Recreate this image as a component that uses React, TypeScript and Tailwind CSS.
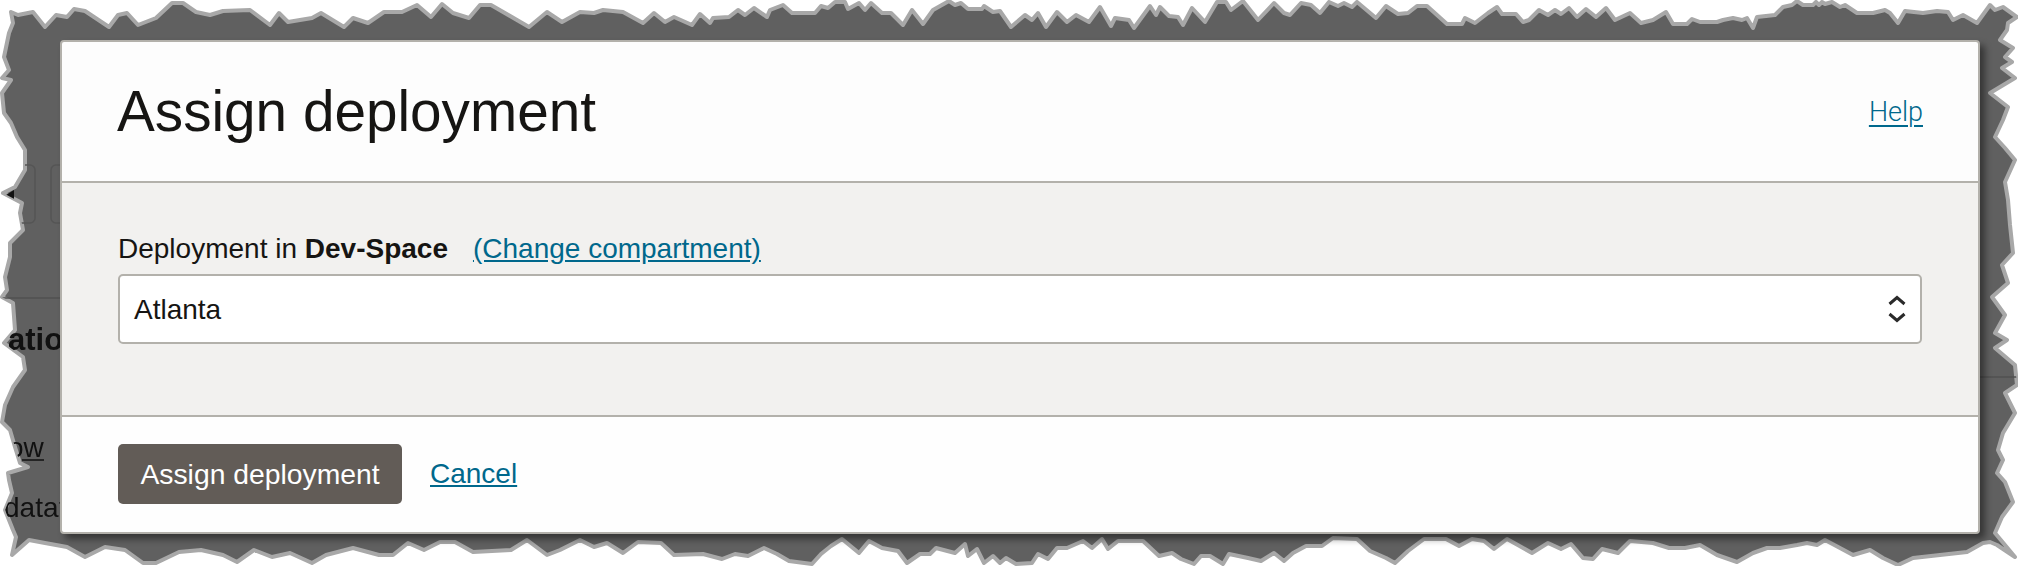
import React from 'react';

const EDGE = `11,12 18,15 33,12 45,27 56,15 67,17 74,9 85,11 109,27 118,15 127,13 138,25 156,18 172,3 183,3 196,12 210,15 223,11 250,10 270,25 279,13 288,22 312,18 321,13 344,27 353,18 368,23 384,12 402,12 417,5 431,17 442,4 453,13 469,18 480,5 491,5 529,27 547,12 562,22 580,12 594,13 603,10 623,12 643,23 654,13 665,22 674,17 692,25 700,14
710,23 713,18 729,17 738,10 745,15 754,8 767,17 770,10 783,5 792,13 815,13 821,6 828,8 835,2 845,2 848,9 859,3 865,10 871,3 882,13 891,13 903,25 912,10 923,24 933,10 949,1 955,5 961,3 968,9 982,9 984,6 993,12 1000,11 1011,27 1025,15 1032,20 1038,13 1046,27 1057,12 1067,22 1076,15 1089,22 1100,7 1111,26 1115,18 1129,20 1134,28 1150,6 1156,15 1160,7 1169,16 1178,17 1183,25 1192,8 1205,22 1217,2 1226,2 1231,10 1243,1 1258,20 1274,3 1284,13 1290,15 1301,3 1311,5 1320,13 1329,2 1338,6 1344,3 1352,7 1357,2 1376,18 1386,6 1398,14 1408,13 1417,6 1427,6 1447,24 1462,24 1465,18 1475,23 1488,13 1497,7 1502,14 1516,14 1523,22 1529,20 1539,10 1548,15 1555,10 1561,14 1569,8 1577,17 1586,9 1596,17 1606,8 1615,20 1630,13 1641,23 1653,20 1666,12 1673,24 1687,24 1692,19 1700,22
1717,22 1723,20 1733,18 1742,20 1747,18 1753,28 1757,17 1775,15 1783,7 1792,5 1797,1 1803,5 1813,5 1816,2 1819,5 1822,2 1825,4 1832,2 1840,7 1845,5 1857,13 1873,13 1885,10 1890,13 1898,23 1905,11 1923,13 1937,11 1948,12 1953,20 1963,15 1977,23 1990,5 1995,10 2003,7 2017,17 2008,23 2007,30 2000,40 2013,48 2005,57 2012,62 2002,68 2015,78 1990,93 2008,107 2003,120 1995,137 2005,148 2015,160 2005,182 2008,200
2010,225 2013,253 2002,265 2008,283 1992,297 2005,315 1995,333 2007,340 1995,348 2015,365 2017,385 2005,393 2015,413 2003,433 1998,450 2003,460 1997,473 2005,482 2013,502 2002,517 1995,533 2015,557 1997,545 1990,542 1983,543 1967,552 1940,555 1913,558 1898,565 1883,558 1870,550 1853,555 1840,548 1825,540 1817,545 1807,543 1797,545 1780,548 1767,548 1753,553 1737,562 1717,555 1700,545
1685,548 1669,548 1653,543 1630,541 1618,553 1602,549 1593,559 1583,558 1571,544 1561,549 1548,543 1532,553 1516,544 1507,539 1494,549 1484,541 1472,539 1459,546 1446,539 1424,539 1408,551 1395,563 1386,558 1370,551 1357,539 1333,538 1322,546 1306,546 1293,553 1284,561 1274,553 1261,561 1248,558 1229,554 1223,564 1210,556 1201,556 1194,564 1181,559 1172,553 1159,556 1143,541 1118,541 1108,549 1102,539 1092,548 1083,541 1067,548 1057,548 1048,559 1038,554 1032,563 1016,564 1006,558 1000,563 993,556 984,563 977,549 968,556 965,544 955,553 936,548 930,554 920,554 907,563 898,551 882,548 869,541 859,553 842,539 831,546 821,554 812,564 789,561 777,554 764,548 748,556 735,554 722,559 703,554
674,555 661,543 638,542 623,553 607,543 594,547 580,540 560,550 547,555 527,540 511,550 473,552 455,542 440,542 424,550 408,543 393,555 379,555 353,548 326,555 312,563 290,553 272,557 254,550 237,562 223,555 201,550 179,552 156,563 143,563 125,550 105,547 85,557 67,547 45,543 29,540 12,555 16,537
13,530 5,510 12,493 9,480 8,473 28,467 20,463 15,447 10,430 2,422 5,405 13,387 25,370 23,357 4,343 15,330 13,303 2,297 7,290 5,277 10,257 10,243 23,230 20,213 22,203 3,193 15,187 25,170 25,150 17,137 11,123 4,113 2,93 11,80 2,78 9,70 4,57 9,33 13,23`;

function Backdrop() {
  return (
    <svg className="absolute inset-0 blur-[0.5px]" width="2018" height="566" viewBox="0 0 2018 566">
      <defs>
        <clipPath id="torn">
          <polygon points={EDGE} />
        </clipPath>
      </defs>
      <polygon points={EDGE} fill="#606060" stroke="#a8a8a8" strokeWidth="4" strokeLinejoin="round" />
      <g clipPath="url(#torn)" className="font-['Liberation_Sans']">
        <rect x="-20" y="165" width="55" height="58" rx="5" fill="none" stroke="#555555" strokeWidth="1.5" />
        <rect x="51" y="165" width="55" height="58" rx="5" fill="none" stroke="#555555" strokeWidth="1.5" />
        <path d="M6 195 L14 190 L14 200 Z" fill="#111111" />
        <line x1="0" y1="298" x2="60" y2="298" stroke="#505050" strokeWidth="1.5" />
        <line x1="1980" y1="377" x2="2018" y2="377" stroke="#505050" strokeWidth="1.5" />
        <text x="8" y="350" fontSize="31" fontWeight="700" fill="#111111">ation</text>
        <text x="8" y="457" fontSize="28" fill="#111111">ow</text>
        <line x1="22" y1="460" x2="44" y2="460" stroke="#111111" strokeWidth="1.5" />
        <text x="4" y="517" fontSize="28" fill="#111111">data</text>
        <text x="59" y="517" fontSize="28" fill="#111111">t</text>
      </g>
    </svg>
  );
}

function SortIcon() {
  return (
    <svg width="18" height="28" viewBox="0 0 18 28" fill="none" stroke="#2a2a2a" strokeWidth="3">
      <path d="M1.5 9 L9 2.5 L16.500 9" />
      <path d="M1.5 19 L9 25.500 L16.500 19" />
    </svg>
  );
}

export default function App() {
  return (
    <div className="relative w-[2018px] h-[566px] overflow-hidden bg-white pt-[40px] pl-[60px] font-['Liberation_Sans',Arial,sans-serif] text-[#161513]">
      <Backdrop />
      <div className="relative w-[1920px] h-[494px] flex flex-col rounded-[4px] border-2 border-[#b3b1ab] bg-[#fdfdfd] shadow-[5px_5px_7px_rgba(0,0,0,0.45)]">
        <div className="h-[139px] shrink-0 flex items-center justify-between pl-[55px] pr-[55px] pt-[2px]">
          <h1 className="text-[56.700px] leading-none">Assign deployment</h1>
          <a className="text-[27px] font-light font-['Roboto',sans-serif] text-[#00688c] underline decoration-2 underline-offset-4">Help</a>
        </div>
        <div className="h-[236px] shrink-0 border-y-2 border-[#b3b1ab] bg-[#f2f1ef] pl-[56px] pr-[56px] pt-[48px]">
          <div className="flex items-center h-[36px] text-[28px] leading-none">
            <span>Deployment in <b>Dev-Space</b></span>
            <a className="ml-[25px] text-[#00688c] underline underline-offset-2">(Change compartment)</a>
          </div>
          <div className="mt-[7px] h-[70px] flex items-center justify-between rounded-[5px] border-2 border-[#b3b1ab] bg-white pl-[14px] pr-[14px]">
            <span className="text-[28px] pt-[2px]">Atlanta</span>
            <SortIcon />
          </div>
        </div>
        <div className="flex-1 flex items-start gap-[28px] pl-[56px] pt-[27px] bg-[#fefefe] rounded-b-[4px]">
          <button className="w-[284px] h-[60px] rounded-[5px] bg-[#625c57] text-white text-[28.300px] leading-none">Assign deployment</button>
          <a className="h-[60px] flex items-center text-[28px] text-[#00688c] underline underline-offset-2">Cancel</a>
        </div>
      </div>
    </div>
  );
}
